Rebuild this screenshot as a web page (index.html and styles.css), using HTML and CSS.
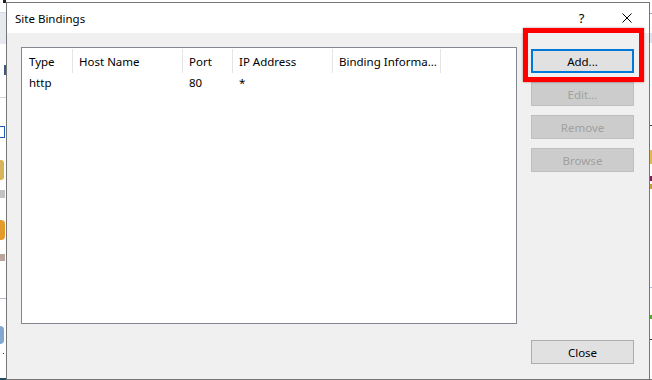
FILE: index.html
```html
<!DOCTYPE html>
<html>
<head>
    <title>Site Bindings</title>
    <meta name="viewport" content="width=device-width, initial-scale=1.0">
    <link rel="stylesheet" href="styles.css">
</head>
<body>
    <div class="desktop">
        <!-- sliver of the IIS manager window behind the dialog -->
        <div class="strip strip-left">
            <span class="bit bit-dark"></span>
            <span class="bit bit-band"></span>
            <span class="bit bit-box"></span>
            <span class="bit bit-line"></span>
            <span class="bit bit-blue"></span>
            <span class="bit bit-gold"></span>
            <span class="bit bit-text"></span>
            <span class="bit bit-key"></span>
            <span class="bit bit-text2"></span>
            <span class="bit bit-line2"></span>
            <span class="bit bit-globe"></span>
            <span class="bit bit-dot"></span>
            <span class="bit bit-bottom"></span>
        </div>

        <div class="dialog">
            <div class="titlebar">
                <span class="title">Site Bindings</span>
                <span class="caption-btn">?</span>
                <span class="caption-btn">
                    <svg width="10" height="10" viewBox="0 0 10 10">
                        <path d="M0.5 0.5 L9.5 9.5 M9.5 0.5 L0.5 9.5" stroke="#000" stroke-width="1" fill="none"/>
                    </svg>
                </span>
            </div>

            <div class="dialog-body">
                <div class="listview">
                    <div class="lv-header">
                        <div class="lv-col">Type</div>
                        <div class="lv-col">Host Name</div>
                        <div class="lv-col">Port</div>
                        <div class="lv-col">IP Address</div>
                        <div class="lv-col">Binding Informa...</div>
                    </div>
                    <div class="lv-row">
                        <div class="lv-cell">http</div>
                        <div class="lv-cell"></div>
                        <div class="lv-cell">80</div>
                        <div class="lv-cell">*</div>
                        <div class="lv-cell"></div>
                    </div>
                </div>

                <div class="actions">
                    <button class="btn btn-default">Add...</button>
                    <button class="btn" disabled>Edit...</button>
                    <button class="btn" disabled>Remove</button>
                    <button class="btn" disabled>Browse</button>
                </div>

                <button class="btn btn-close">Close</button>
            </div>

            <!-- red annotation box round the Add button -->
            <div class="callout"></div>
        </div>

        <div class="strip strip-right">
            <span class="bit r-line"></span>
            <span class="bit r-band"></span>
            <span class="bit r-dark"></span>
            <span class="bit r-gold"></span>
            <span class="bit r-purple"></span>
            <span class="bit r-gold2"></span>
            <span class="bit r-line2"></span>
            <span class="bit r-green"></span>
            <span class="bit r-dot"></span>
            <span class="bit r-bottom"></span>
        </div>
    </div>
</body>
</html>
```

FILE: styles.css
```css
body {
    margin: 0;
    padding: 0;
    background-color: #fff;
    font-family: "Noto Sans", "Open Sans", sans-serif;
    font-size: 11.5px;
    color: #000;
}
.desktop {
    display: flex;
    width: 652px;
    height: 380px;
    overflow: hidden;
}
.strip {
    display: flex;
    flex-direction: column;
    height: 380px;
    background-color: #fff;
}
.strip-left {
    width: 6px;
}
.strip-right {
    width: 2px;
}
.bit {
    display: block;
}

/* left sliver */
.bit-dark { height: 3px; width: 3px; margin-left: 3px; background-color: #222; }
.bit-band { height: 31px; margin-top: 9px; background-color: #e6eaef; border-top: 1px solid #d5dbe3; }
.bit-box { height: 10px; width: 2px; margin-left: 4px; margin-top: 21px; background-color: #3d5a80; }
.bit-line { height: 1px; margin-top: 22px; background-color: #d4d4d4; }
.bit-blue { height: 10px; width: 4px; margin-top: 28px; border-top: 1px solid #1b5fb5; border-bottom: 1px solid #1b5fb5; border-right: 1px solid #1b5fb5; background-color: #fff; }
.bit-gold { height: 20px; width: 4px; margin-top: 22px; border-radius: 0 3px 3px 0; background-color: #d9b45a; }
.bit-text { height: 8px; width: 5px; margin-top: 10px; background-color: #9a9a9a; opacity: .6; }
.bit-key { height: 20px; width: 5px; margin-top: 22px; border-radius: 0 4px 4px 0; background-color: #e39b2c; }
.bit-text2 { height: 7px; width: 5px; margin-top: 14px; background-color: #8a6a5a; opacity: .6; }
.bit-line2 { height: 1px; margin-top: 37px; background-color: #aebbd0; }
.bit-globe { height: 18px; width: 4px; margin-top: 27px; border-radius: 0 9px 9px 0; background-color: #82a7d0; }
.bit-dot { height: 1px; width: 1px; margin-left: 3px; margin-top: 9px; background-color: #333; }
.bit-bottom { height: 2px; margin-top: auto; background-color: #1f4a66; }

/* right sliver */
.r-line { height: 1px; margin-top: 13px; background-color: #9aa6b5; }
.r-band { height: 10px; margin-top: 19px; background-color: #dbe4ee; }
.r-dark { height: 1px; margin-top: 82px; background-color: #3a3a3a; }
.r-gold { height: 14px; margin-top: 24px; background-color: #e2b84f; }
.r-purple { height: 5px; margin-top: 12px; background-color: #7a1f5b; }
.r-gold2 { height: 5px; margin-top: 3px; background-color: #c89a3a; }
.r-line2 { height: 1px; margin-top: 98px; background-color: #aebbd0; }
.r-green { height: 4px; margin-top: 27px; background-color: #4caf32; }
.r-dot { height: 1px; margin-top: 20px; background-color: #333; }
.r-bottom { height: 1px; margin-top: auto; background-color: #7a7a7a; }

/* dialog window */
.dialog {
    position: relative;
    width: 644px;
    height: 378px;
    margin-top: 2px;
    box-sizing: border-box;
    border: 1px solid #767676;
    background-color: #f0f0f0;
    display: flex;
    flex-direction: column;
}
.titlebar {
    display: flex;
    align-items: center;
    height: 30px;
    background-color: #fff;
}
.title {
    flex: 1;
    padding-left: 8px;
}
.caption-btn {
    width: 45px;
    display: flex;
    justify-content: center;
    align-items: center;
    font-size: 13px;
}
.dialog-body {
    display: grid;
    grid-template-columns: 496px 103px;
    grid-template-rows: 277px auto;
    column-gap: 14px;
    padding: 14px 15px 15px 14px;
}

/* list view */
.listview {
    box-sizing: border-box;
    border: 1px solid #828790;
    background-color: #fff;
}
.lv-header, .lv-row {
    display: grid;
    grid-template-columns: 51px 110px 50px 100px 108px;
}
.lv-header {
    height: 24px;
    padding-top: 1px;
}
.lv-col {
    display: flex;
    align-items: center;
    padding-left: 6px;
    border-right: 1px solid #e5e5e5;
    white-space: nowrap;
    overflow: hidden;
}
.lv-col:first-child, .lv-cell:first-child {
    padding-left: 7px;
}
.lv-row {
    height: 19px;
    align-items: center;
}
.lv-cell {
    padding-left: 6px;
    white-space: nowrap;
}

/* buttons */
.actions {
    display: flex;
    flex-direction: column;
    gap: 9px;
    padding-top: 2px;
}
.btn {
    height: 24px;
    width: 103px;
    box-sizing: border-box;
    border: 1px solid #adadad;
    background-color: #e1e1e1;
    font-family: inherit;
    font-size: 11.5px;
    color: #000;
    padding: 0;
}
.btn:disabled {
    background-color: #cccccc;
    border-color: #bfbfbf;
    color: #a0a0a0;
}
.btn-default {
    border: 2px solid #0078d7;
}
.btn-close {
    grid-column: 2;
    margin-top: 16px;
}

.callout {
    position: absolute;
    left: 516px;
    top: 25px;
    width: 121px;
    height: 54px;
    box-sizing: border-box;
    border: 5px solid #f00;
    box-shadow: 0 0 2px rgba(120, 0, 0, .5);
}
```
